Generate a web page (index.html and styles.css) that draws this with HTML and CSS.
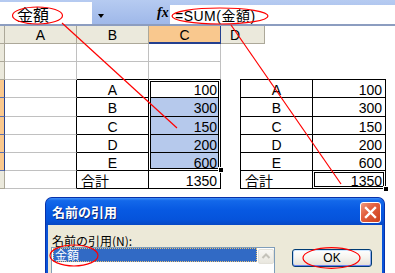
FILE: index.html
```html
<!DOCTYPE html>
<html lang="ja">
<head>
<meta charset="utf-8">
<title>名前の引用</title>
<link rel="stylesheet" href="styles.css">
</head>
<body>
<div class="page">
  <div class="formula-bar">
    <div class="namebox">金額</div>
    <div class="dropdown"><span class="arrow"></span></div>
    <div class="fx">fx</div>
    <div class="formula">=SUM(金額)</div>
  </div>
  <div class="col-headers">
    <div class="hdr corner"></div>
    <div class="hdr col">A</div>
    <div class="hdr col">B</div>
    <div class="hdr col sel">C</div>
    <div class="hdr dcol">D</div>
  </div>
  <div class="sheet-body">
    <div class="grid">
      <div class="selection">
        <div class="c t num">100</div>
        <div class="c t num blue">300</div>
        <div class="c t num blue">150</div>
        <div class="c t num blue">200</div>
        <div class="c t num blue">600</div>
        <span class="handle"></span>
      </div>
      <div class="c rh"></div><div class="c"></div><div class="c"></div><div class="c"></div>
      <div class="c rh"></div><div class="c"></div><div class="c bt"></div><div class="c bt"></div>
      <div class="c rh on"></div><div class="c br"></div><div class="c t ctr">A</div>
      <div class="c rh on"></div><div class="c br"></div><div class="c t ctr">B</div>
      <div class="c rh on"></div><div class="c br"></div><div class="c t ctr">C</div>
      <div class="c rh on"></div><div class="c br"></div><div class="c t ctr">D</div>
      <div class="c rh on"></div><div class="c br"></div><div class="c t ctr">E</div>
      <div class="c rh"></div><div class="c br"></div><div class="c t jp">合計</div><div class="c t num">1350</div>
    </div>
    <div class="table2">
      <div class="c2 ctr">A</div><div class="c2 num">100</div>
      <div class="c2 ctr">B</div><div class="c2 num">300</div>
      <div class="c2 ctr">C</div><div class="c2 num">150</div>
      <div class="c2 ctr">D</div><div class="c2 num">200</div>
      <div class="c2 ctr">E</div><div class="c2 num">600</div>
      <div class="c2 jp">合計</div><div class="c2 num active">1350<span class="handle2"></span></div>
    </div>
  </div>

  <div class="dialog">
    <div class="titlebar">
      <span class="title">名前の引用</span>
      <span class="close">
        <svg width="21" height="21" viewBox="0 0 21 21"><path d="M6 6 L15 15 M15 6 L6 15" stroke="#fff" stroke-width="2.4" stroke-linecap="square" fill="none"/></svg>
      </span>
    </div>
    <div class="dbody">
      <div class="label">名前の引用(<u>N</u>):</div>
      <div class="lrow">
        <div class="listbox">
          <div class="item">金額</div>
          <div class="scrollup">
            <svg width="14" height="13" viewBox="0 0 14 13"><path d="M3.5 8 L7 4.5 L10.5 8" stroke="#c4c2ba" stroke-width="2" fill="none"/></svg>
          </div>
        </div>
        <div class="okbtn">OK</div>
      </div>
    </div>
  </div>

  <svg class="annot" width="395" height="273" viewBox="0 0 395 273">
    <g fill="none" stroke="#ff0000" stroke-width="1.2">
      <ellipse cx="37.5" cy="15.5" rx="25" ry="8.5"/>
      <ellipse cx="220" cy="16" rx="48" ry="8"/>
      <ellipse cx="74" cy="255.5" rx="24" ry="10.5"/>
      <ellipse cx="331.5" cy="258" rx="28.5" ry="10.3"/>
      <line x1="62" y1="23" x2="177" y2="128"/>
      <line x1="231" y1="25" x2="341" y2="184"/>
    </g>
  </svg>
</div>
</body>
</html>
```
FILE: styles.css
```css
* { box-sizing: border-box; margin: 0; padding: 0; }
html, body { width: 395px; height: 273px; overflow: hidden; background: #fff; }
body {
  font-family: "Liberation Sans", "Noto Sans CJK JP", sans-serif;
  font-size: 14px;
  color: #000;
}
.page { position: relative; width: 395px; height: 273px; overflow: hidden; }

/* formula bar */
.formula-bar {
  display: flex;
  height: 26px;
  background: linear-gradient(#b6cbf1, #9fb8e9);
  border-bottom: 2px solid #8c9dc0;
}
.namebox {
  width: 92px;
  height: 22px;
  margin-top: 2px;
  background: #fff;
  font-family: "Noto Sans CJK JP", sans-serif;
  font-size: 16px;
  line-height: 18px;
  padding: 3px 0 0 17px;
}
.dropdown { width: 60px; padding: 14px 0 0 6px; }
.arrow {
  display: block;
  width: 0; height: 0;
  border-left: 3.5px solid transparent;
  border-right: 3.5px solid transparent;
  border-top: 4px solid #000;
}
.fx {
  width: 18px;
  font-family: "Liberation Serif", serif;
  font-style: italic;
  font-weight: bold;
  font-size: 14px;
  line-height: 16px;
  padding: 5px 0 0 5px;
}
.formula {
  flex: 1;
  height: 19px;
  margin-top: 5px;
  background: #fff;
  padding: 3px 0 0 5px;
  line-height: 17px;
  letter-spacing: 0.5px;
  white-space: nowrap;
}

/* column headers */
.col-headers { display: flex; height: 18px; }
.hdr {
  height: 18px;
  background: #ebe9dc;
  border-right: 1px solid #aca899;
  border-bottom: 1px solid #aca899;
  text-align: center;
  line-height: 17px;
  padding-top: 1px;
}
.hdr.corner { width: 5px; }
.hdr.col { width: 72px; }
.hdr.sel {
  background: #f9c88e;
  border-right-color: #24408f;
  border-bottom: 2px solid #24408f;
}
.hdr.dcol { width: 44px; text-align: left; padding-left: 9px; }

/* sheet body */
.sheet-body { display: flex; align-items: flex-start; }
.grid {
  display: grid;
  grid-template-columns: 5px 72px 72px 72px;
  grid-template-rows: 18px 18px 18px 19px 18px 18px 18px 18px;
  width: 221px;
}
.c {
  border-right: 1px solid #c0c0c0;
  border-bottom: 1px solid #c0c0c0;
  line-height: 18px;
  padding-top: 1px;
  white-space: nowrap;
  overflow: hidden;
}
.rh { background: #ebe9dc; border-color: #aca899; }
.rh.on { background: #f9c88e; border-right-color: #24408f; border-bottom-color: #5a6fb0; }
.t { border-color: #000; }
.bt { border-bottom-color: #000; }
.br { border-right-color: #000; }
.ctr { text-align: center; }
.num { text-align: right; padding-right: 3px; }
.jp { text-align: left; padding-left: 4px; }
.blue { background: #b6c9ec; }

.selection {
  grid-column: 4;
  grid-row: 3 / 8;
  display: grid;
  grid-template-rows: 18px 19px 18px 18px 18px;
  position: relative;
}
.selection::after {
  content: "";
  position: absolute;
  left: 1px; top: 1px; right: 2px; bottom: 2px;
  border: 1px solid #000;
  box-shadow: 0 0 0 1px #fff;
}
.handle {
  position: absolute;
  right: -3px;
  bottom: -2px;
  width: 6px;
  height: 6px;
  background: #000;
  border: 1px solid #fff;
  z-index: 1;
}

/* second table */
.table2 {
  display: grid;
  grid-template-columns: 72px 73px;
  grid-template-rows: 18px 19px 18px 18px 18px 18px;
  margin: 35px 0 0 19px;
  border-left: 1px solid #000;
  border-top: 1px solid #000;
}
.c2 {
  border-right: 1px solid #000;
  border-bottom: 1px solid #000;
  line-height: 18px;
  padding-top: 1px;
  white-space: nowrap;
}
.c2.num { padding-right: 3px; }
.c2.active {
  position: relative;
  box-shadow: inset 0 0 0 1px #fff, inset 0 0 0 2px #000;
}
.handle2 {
  position: absolute;
  right: -4px;
  bottom: -4px;
  width: 6px;
  height: 6px;
  background: #000;
  border: 1px solid #fff;
}

/* dialog */
.dialog {
  position: absolute;
  left: 45px;
  top: 197px;
  width: 340px;
  height: 90px;
  border-radius: 7px 7px 0 0;
  background: #0a53d8;
  border: 1px solid #0831a9;
  border-bottom: none;
  overflow: hidden;
}
.titlebar {
  height: 27px;
  display: flex;
  justify-content: space-between;
  padding: 0 3px 0 6px;
  background: linear-gradient(#3f8ff7 0%, #1368ea 10%, #0759e2 45%, #0553db 80%, #0848c4 100%);
}
.title {
  color: #fff;
  font-family: "Noto Sans CJK JP", sans-serif;
  font-weight: bold;
  font-size: 13px;
  line-height: 27px;
  text-shadow: 1px 1px 0 #0a2a80;
}
.close {
  width: 21px;
  height: 21px;
  margin-top: 4px;
  border: 1px solid #fff;
  border-radius: 3px;
  background: linear-gradient(135deg, #ee9a80 0%, #e2603f 40%, #cc3f1c 100%);
  display: flex;
}
.close svg { margin: -1px; }
.dbody {
  margin: 0 2px;
  height: 62px;
  background: #ece9d8;
  padding: 9px 0 0 3px;
}
.label {
  font-family: "Noto Sans CJK JP", sans-serif;
  font-size: 12px;
  line-height: 13px;
  padding-left: 1px;
}
.label u { text-decoration: underline; }
.lrow { display: flex; align-items: flex-start; }
.listbox {
  width: 224px;
  height: 40px;
  border: 1px solid #7f9db9;
  background: #fff;
  display: flex;
  align-items: flex-start;
  padding-left: 1px;
}
.item {
  flex: 1;
  height: 14px;
  margin-right: 1px;
  background: #316ac5;
  color: #fff;
  font-family: "Noto Sans CJK JP", sans-serif;
  font-size: 12px;
  line-height: 14px;
  padding-left: 2px;
  outline: 1px dotted #e6c27a;
  outline-offset: -1px;
}
.scrollup {
  width: 16px;
  height: 15px;
  margin-top: 1px;
  background: linear-gradient(#f8f7f3, #e9e7df);
  border: 1px solid #e3e1d9;
  border-radius: 2px;
  display: flex;
  justify-content: center;
  align-items: center;
}
.okbtn {
  width: 80px;
  height: 18px;
  margin: 2px 0 0 17px;
  border: 1px solid #003c74;
  border-radius: 3px;
  background: linear-gradient(#ffffff 0%, #f6f5f0 45%, #e6e3da 90%, #d6d0c5 100%);
  box-shadow: inset 0 1px 0 #cee7ff, inset 0 -1px 0 #6982ee, inset 1px 0 0 #b8d2f8, inset -1px 0 0 #8eaaf0;
  text-align: center;
  font-size: 12px;
  line-height: 16px;
}

/* annotations */
.annot { position: absolute; left: 0; top: 0; pointer-events: none; }
```
